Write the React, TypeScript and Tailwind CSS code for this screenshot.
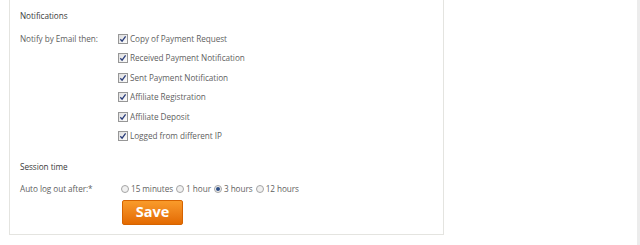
import React from "react";

function Check() {
  return (
    <svg width="10" height="10" viewBox="0 0 10 10" className="shrink-0">
      <defs>
        <linearGradient id="cbg" x1="0" y1="0" x2="1" y2="1">
          <stop offset="0" stopColor="#dcdcdc" />
          <stop offset="1" stopColor="#ffffff" />
        </linearGradient>
      </defs>
      <rect x="0.5" y="0.5" width="9" height="9" fill="url(#cbg)" stroke="#979797" />
      <path d="M2.3 5.2 L4.1 7.2 L7.6 2.4" fill="none" stroke="#2a3d7a" strokeWidth="1.3" />
    </svg>
  );
}

function Radio({ on }: { on?: boolean }) {
  return (
    <svg width="8" height="8" viewBox="0 0 8 8" className="shrink-0">
      <circle cx="4" cy="4" r="3.5" fill="#f1f1f1" stroke="#a4a4a4" />
      {on && <circle cx="4" cy="4" r="2" fill="#2d4f86" />}
    </svg>
  );
}

const items = [
  "Copy of Payment Request",
  "Received Payment Notification",
  "Sent Payment Notification",
  "Affiliate Registration",
  "Affiliate Deposit",
  "Logged from different IP",
];

export default function App() {
  return (
    <div
      className="w-[640px] h-[245px] bg-white flex text-[8.2px] tracking-[-0.05px] text-[#5f5f5f]"
      style={{ fontFamily: '"Open Sans", "Noto Sans", sans-serif' }}
    >
      <div className="ml-[9px] w-[435px] h-[235px] border-x border-b border-[#e4e4e0] pl-[10px] pt-[6px] flex flex-col">
        <div className="h-[20px] flex items-center text-[#3a3a3a]">Notifications</div>
        <div className="mt-[3px] flex">
          <div className="w-[98px] h-[19.5px] flex items-center">Notify by Email then:</div>
          <div className="flex flex-col">
            {items.map((t) => (
              <div key={t} className="h-[19.5px] flex items-center gap-[2px]">
                <Check />
                <span>{t}</span>
              </div>
            ))}
          </div>
        </div>
        <div className="mt-[11px] h-[20px] flex items-center text-[#3a3a3a]">Session time</div>
        <div className="mt-[2px] h-[20px] flex items-center">
          <div className="w-[101px]">Auto log out after:*</div>
          <div className="flex items-center">
            <Radio />
            <span className="ml-[2px] mr-[3px]">15 minutes</span>
            <Radio />
            <span className="ml-[2px] mr-[3px]">1 hour</span>
            <Radio on />
            <span className="ml-[2px] mr-[3px]">3 hours</span>
            <Radio />
            <span className="ml-[2px]">12 hours</span>
          </div>
        </div>
        <div className="mt-[1px] pl-[102px]">
          <button className="w-[61px] h-[25px] rounded-[2px] bg-gradient-to-b from-[#f99b2a] to-[#e36a00] border border-[#d56300] text-white font-bold text-[14.5px] leading-none flex items-center justify-center">
            Save
          </button>
        </div>
      </div>
      <div className="flex-1" />
      <div className="w-[3px] h-full bg-[#ececec]" />
    </div>
  );
}
